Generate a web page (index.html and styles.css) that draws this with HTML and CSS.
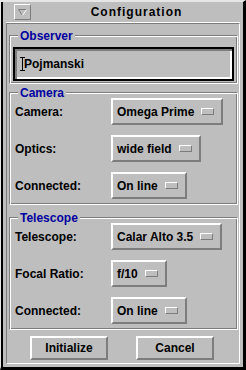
FILE: index.html
```html
<!DOCTYPE html>
<html lang="en">

<head>
    <meta charset="UTF-8">
    <title>Configuration</title>
    <link rel="stylesheet" href="styles.css">
</head>

<body>
    <div class="window">
        <div class="titlebar">
            <span class="menu-btn">
                <svg width="9" height="7" viewBox="0 0 9 7">
                    <path d="M0.5 0.5 H8.5" stroke="#7d7d7d" fill="none" />
                    <path d="M0.5 0.5 L4.5 6.5" stroke="#7d7d7d" fill="none" />
                    <path d="M8.5 0.5 L4.5 6.5" stroke="#ffffff" fill="none" />
                </svg>
            </span>
            <span class="title">Configuration</span>
        </div>

        <div class="client">
            <section class="group observer">
                <div class="group-title">Observer</div>
                <div class="textfield">
                    <svg class="caret" width="5" height="14" viewBox="0 0 5 14">
                        <path d="M0 0.5 H5 M2.5 0 V14 M0 13.5 H5" stroke="#000" fill="none" />
                    </svg>Pojmanski
                </div>
            </section>

            <section class="group camera">
                <div class="group-title">Camera</div>
                <div class="rows">
                    <label>Camera:</label>
                    <button class="option">Omega Prime<span class="indicator"></span></button>
                    <label>Optics:</label>
                    <button class="option">wide field<span class="indicator"></span></button>
                    <label>Connected:</label>
                    <button class="option">On line<span class="indicator"></span></button>
                </div>
            </section>

            <section class="group telescope">
                <div class="group-title">Telescope</div>
                <div class="rows">
                    <label>Telescope:</label>
                    <button class="option">Calar Alto 3.5<span class="indicator"></span></button>
                    <label>Focal Ratio:</label>
                    <button class="option">f/10<span class="indicator"></span></button>
                    <label>Connected:</label>
                    <button class="option">On line<span class="indicator"></span></button>
                </div>
            </section>

            <div class="actions">
                <button class="push">Initialize</button>
                <button class="push">Cancel</button>
            </div>
        </div>
    </div>
</body>

</html>
```

FILE: styles.css
```css
* {
    box-sizing: border-box;
}

body {
    margin: 0;
    background-color: #000000;
    font-family: "Liberation Sans", Arial, sans-serif;
    font-size: 12px;
    font-weight: bold;
    color: #000000;
}

.window {
    width: 246px;
    height: 370px;
    background-color: #bebebe;
    border-style: solid;
    border-width: 2px 3px 3px 1px;
    border-color: #e6e6e6 #000000 #000000 #e6e6e6;
    box-shadow: inset 2px 0 0 #000000;
    padding: 2px 3px 3px 5px;
    display: flex;
    flex-direction: column;
}

.titlebar {
    height: 19px;
    display: flex;
    align-items: flex-start;
    padding-left: 8px;
    border-bottom: 1px solid #ffffff;
}

.menu-btn {
    width: 17px;
    height: 16px;
    border: 1px solid;
    border-color: #ffffff #7d7d7d #7d7d7d #ffffff;
    display: flex;
    justify-content: center;
    align-items: center;
}

.title {
    flex: 1;
    text-align: center;
    letter-spacing: 1px;
    line-height: 17px;
    padding-left: 2px;
}

.client {
    flex: 1;
    border: 1px solid;
    border-color: #7d7d7d #ffffff #ffffff #7d7d7d;
    padding: 11px 0 0 2px;
    display: flex;
    flex-direction: column;
}

/* etched group box, title sits on the top edge */
.group {
    width: 229px;
    padding: 0 3px 5px 7px;
    border: 1px solid;
    border-color: #7d7d7d #ffffff #ffffff #7d7d7d;
    box-shadow: inset 1px 1px 0 #ffffff, inset -1px -1px 0 #7d7d7d;
}

.group-title {
    width: fit-content;
    margin: -5px 0 0 1px;
    padding: 0 2px;
    line-height: 10px;
    color: #0000a0;
    background-color: #bebebe;
}

.observer {
    padding-bottom: 2px;
}

.camera {
    margin-top: 8px;
}

.telescope {
    margin-top: 12px;
}

.textfield {
    margin: 6px 0 0 -4px;
    height: 34px;
    border: 2px solid #000000;
    box-shadow: inset 2px 2px 0 #7d7d7d, inset -2px -2px 0 #ffffff;
    display: flex;
    align-items: center;
    padding-left: 5px;
}

.caret {
    margin-right: -1px;
}

.rows {
    display: grid;
    grid-template-columns: 96px max-content;
    row-gap: 10px;
    align-items: center;
    justify-items: start;
    margin-left: -2px;
}

.option {
    height: 27px;
    display: inline-flex;
    align-items: center;
    gap: 7px;
    padding: 0 7px 0 4px;
    font: inherit;
    color: #000000;
    background-color: #bebebe;
    border: 2px solid;
    border-color: #ffffff #7d7d7d #7d7d7d #ffffff;
}

.indicator {
    width: 13px;
    height: 7px;
    border: 1px solid;
    border-color: #ffffff #7d7d7d #7d7d7d #ffffff;
}

.actions {
    display: flex;
    justify-content: center;
    gap: 28px;
    margin-top: 6px;
    padding-right: 4px;
}

.push {
    width: 78px;
    height: 24px;
    font: inherit;
    color: #000000;
    background-color: #bebebe;
    border: 2px solid;
    border-color: #ffffff #7d7d7d #7d7d7d #ffffff;
}
```
